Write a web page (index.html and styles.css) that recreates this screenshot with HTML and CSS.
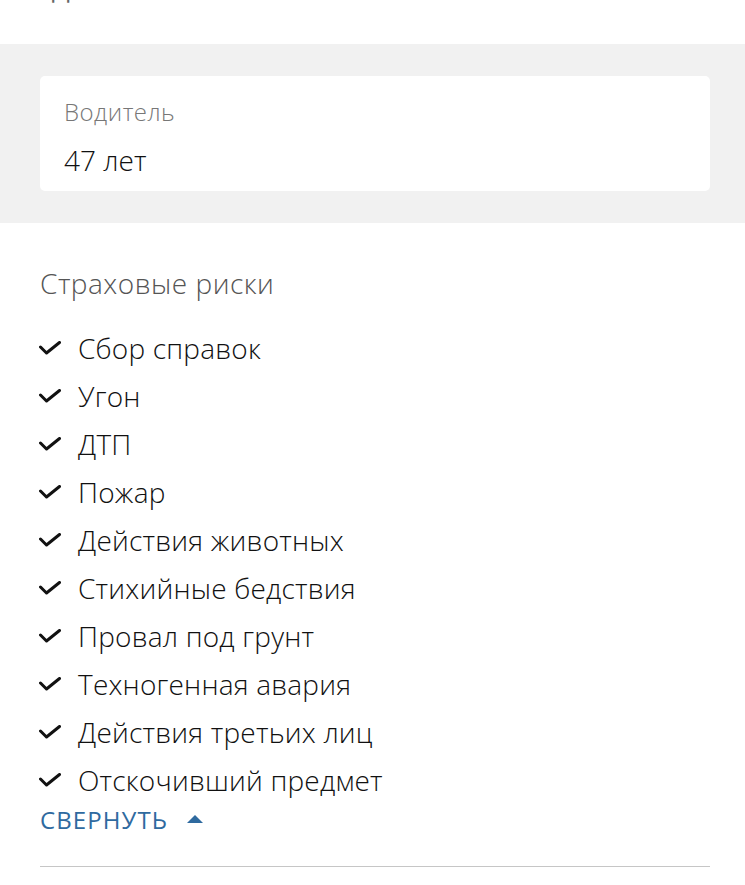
FILE: index.html
```html
<!DOCTYPE html>
<html lang="ru">
<head>
<meta charset="utf-8">
<link rel="stylesheet" href="styles.css">
</head>
<body>
<div class="top"><span class="cut">Д</span></div>
<section class="band">
  <div class="card">
    <div class="label">Водитель</div>
    <div class="value">47 лет</div>
  </div>
</section>
<section class="risks">
  <h2 class="title">Страховые риски</h2>
  <ul class="list">
    <li><svg class="chk" viewBox="0 0 22 14"><path d="M1.5 6l6 6L20.5 1.5"/></svg>Сбор справок</li>
    <li><svg class="chk" viewBox="0 0 22 14"><path d="M1.5 6l6 6L20.5 1.5"/></svg>Угон</li>
    <li><svg class="chk" viewBox="0 0 22 14"><path d="M1.5 6l6 6L20.5 1.5"/></svg>ДТП</li>
    <li><svg class="chk" viewBox="0 0 22 14"><path d="M1.5 6l6 6L20.5 1.5"/></svg>Пожар</li>
    <li><svg class="chk" viewBox="0 0 22 14"><path d="M1.5 6l6 6L20.5 1.5"/></svg>Действия животных</li>
    <li><svg class="chk" viewBox="0 0 22 14"><path d="M1.5 6l6 6L20.5 1.5"/></svg>Стихийные бедствия</li>
    <li><svg class="chk" viewBox="0 0 22 14"><path d="M1.5 6l6 6L20.5 1.5"/></svg>Провал под грунт</li>
    <li><svg class="chk" viewBox="0 0 22 14"><path d="M1.5 6l6 6L20.5 1.5"/></svg>Техногенная авария</li>
    <li><svg class="chk" viewBox="0 0 22 14"><path d="M1.5 6l6 6L20.5 1.5"/></svg>Действия третьих лиц</li>
    <li><svg class="chk" viewBox="0 0 22 14"><path d="M1.5 6l6 6L20.5 1.5"/></svg>Отскочивший предмет</li>
  </ul>
  <a class="toggle" href="#">СВЕРНУТЬ<svg class="tri" viewBox="0 0 16 8"><path d="M8 0L16 8H0z"/></svg></a>
  <hr class="divider">
</section>
</body>
</html>
```
FILE: styles.css
```css
* { box-sizing: border-box; }
html, body { margin: 0; padding: 0; background: #fff; }
body {
  font-family: "Open Sans", "Noto Sans", sans-serif;
  color: #111;
  width: 745px;
}
.top {
  height: 44px;
  position: relative;
  overflow: hidden;
}
.cut {
  position: absolute;
  left: 52px;
  top: -27px;
  font-size: 26px;
  line-height: 30px;
  color: #666;
}
.band {
  background: #f1f1f1;
  padding: 32px 35px 32px 40px;
}
.card {
  background: #fff;
  border-radius: 5px;
  height: 115px;
  padding: 20px 24px 0;
}
.label {
  font-size: 24px;
  letter-spacing: 0.5px;
  color: #777;
  line-height: 32px;
  font-weight: 300;
}
.value {
  font-size: 28px;
  color: #111;
  line-height: 32px;
  margin-top: 16px;
  font-weight: 350;
}
.risks {
  padding: 0 35px 0 40px;
}
.title {
  margin: 0;
  padding-top: 42px;
  font-weight: 300;
  font-size: 28px;
  letter-spacing: 0.5px;
  line-height: 36px;
  color: #555;
}
.list {
  list-style: none;
  margin: 23px 0 0;
  padding: 0;
}
.list li {
  display: flex;
  align-items: center;
  height: 48px;
  font-size: 28px;
  letter-spacing: 0.2px;
  font-weight: 350;
  color: #111;
}
.chk {
  width: 22px;
  height: 14px;
  margin-left: -1px;
  margin-right: 17px;
  fill: none;
  stroke: #111;
  stroke-width: 3;
  stroke-linecap: round;
  stroke-linejoin: round;
}
.toggle {
  display: flex;
  align-items: center;
  height: 30px;
  font-size: 24px;
  letter-spacing: 1.1px;
  color: #2f6a9f;
  text-decoration: none;
}
.tri {
  width: 16px;
  height: 8px;
  margin-left: 19px;
  fill: #2f6a9f;
}
.divider {
  border: 0;
  border-top: 1px solid #c6c6c6;
  margin: 32px 0 0;
}
```
